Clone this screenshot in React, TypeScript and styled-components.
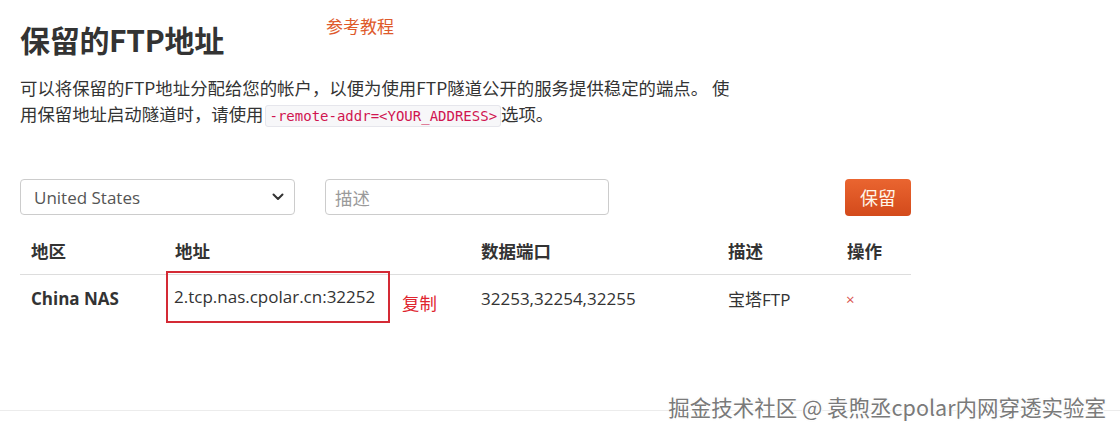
import React from "react";
import styled, { createGlobalStyle } from "styled-components";

const Global = createGlobalStyle`
  html, body { margin: 0; padding: 0; background: #fff; }
  body {
    font-family: "Open Sans", "Noto Sans CJK SC", sans-serif;
    color: #333;
    width: 1120px;
    height: 435px;
    overflow: hidden;
  }
  #root { position: relative; height: 435px; }
`;

const Page = styled.div`
  display: flex;
  flex-direction: column;
  height: 435px;
`;

const Content = styled.main`
  width: 891px;
  padding: 0 0 0 20px;
  display: flex;
  flex-direction: column;
`;

const TitleRow = styled.div`
  display: flex;
  align-items: flex-start;
  gap: 102px;
  padding-top: 16px;
`;

const Title = styled.h1`
  margin: 6px 0 0;
  font-size: 30px;
  line-height: 34px;
  font-weight: 700;
  color: #333;
  font-family: "Noto Sans CJK SC", "Open Sans", sans-serif;
  letter-spacing: -0.3px;
`;

const GuideLink = styled.a`
  font-size: 17px;
  line-height: 20px;
  color: #de5a2b;
  text-decoration: none;
  font-family: "Noto Sans CJK SC", sans-serif;
`;

const Intro = styled.p`
  margin: 19px 0 0;
  width: 725px;
  font-size: 17.4px;
  line-height: 26px;
  color: #333;
  font-family: "Noto Sans CJK SC", "Open Sans", sans-serif;
`;

const Code = styled.code`
  font-family: "DejaVu Sans Mono", "Liberation Mono", monospace;
  font-size: 14px;
  line-height: 18px;
  color: #d01450;
  background: #f7f7f9;
  border: 1px solid #e6e6ec;
  border-radius: 3px;
  padding: 2px 3px;
  margin: 0 0 0 2px;
`;

const FormRow = styled.div`
  margin-top: 52px;
  display: flex;
  align-items: center;
  height: 36px;
`;

const SelectBox = styled.div`
  position: relative;
  width: 275px;
  height: 36px;
  box-sizing: border-box;
  border: 1px solid #ccc;
  border-radius: 4px;
  display: flex;
  align-items: center;
  justify-content: space-between;
  padding: 0 10px 0 13px;
  font-size: 17px;
  color: #555;
  font-family: "Open Sans", sans-serif;
`;

const TextInput = styled.input`
  margin-left: 30px;
  width: 284px;
  height: 36px;
  box-sizing: border-box;
  border: 1px solid #ccc;
  border-radius: 4px;
  padding: 0 9px;
  font-size: 17.4px;
  font-family: "Noto Sans CJK SC", sans-serif;
  outline: none;
  &::placeholder { color: #9a9a9a; }
`;

const Reserve = styled.button`
  margin-left: auto;
  width: 66px;
  height: 37px;
  border: none;
  border-radius: 4px;
  background: linear-gradient(#ea6530, #d34a1b);
  color: #fff6ea;
  font-size: 18px;
  font-family: "Noto Sans CJK SC", sans-serif;
  padding: 0;
`;

const Grid = styled.div`
  margin-top: 12px;
  display: grid;
  grid-template-columns: 144px 306px 247px 119px 75px;
`;

const Cell = styled.div<{ $head?: boolean; $bold?: boolean }>`
  height: 47px;
  display: flex;
  align-items: center;
  padding-left: 11px;
  font-size: ${(p) => (p.$head ? "17.5px" : "17px")};
  font-weight: ${(p) => (p.$head || p.$bold ? 700 : 400)};
  color: #333;
  font-family: ${(p) =>
    p.$head ? `"Noto Sans CJK SC", sans-serif` : `"Open Sans", "Noto Sans CJK SC", sans-serif`};
  border-bottom: ${(p) => (p.$head ? "1px solid #ddd" : "none")};
  white-space: nowrap;
`;

const AddrCell = styled(Cell)`
  padding-left: 2px;
`;

const AddrBox = styled.span`
  display: inline-flex;
  align-items: center;
  box-sizing: border-box;
  width: 224px;
  height: 52px;
  margin-top: -4px;
  padding-left: 6px;
  border: 2px solid #d42a35;
`;

const CopyLink = styled.span`
  margin-left: 12px;
  margin-top: 8px;
  color: #e0242e;
  font-size: 17.4px;
  font-family: "Noto Sans CJK SC", sans-serif;
`;

const Remove = styled.span`
  color: #d9534f;
  font-size: 15px;
  margin-left: -1px;
`;

const Footer = styled.footer`
  margin-top: auto;
  margin-bottom: 24px;
  border-top: 1px solid #ececec;
`;

const Watermark = styled.div`
  position: absolute;
  right: 14px;
  top: 393px;
  font-size: 21.5px;
  line-height: 28px;
  color: #7a7a7a;
  font-family: "Noto Sans CJK SC", sans-serif;
  text-shadow: 1px 1px 0 #fff, -1px -1px 0 #fff, 1px -1px 0 #fff, -1px 1px 0 #fff, 0 0 2px #ccc;
  white-space: nowrap;
`;

const Chevron = () => (
  <svg width="12" height="8" viewBox="0 0 12 8">
    <path d="M1.5 1.5 L6 6 L10.5 1.5" fill="none" stroke="#333" strokeWidth="2" strokeLinecap="round" strokeLinejoin="round" />
  </svg>
);

export default function App() {
  return (
    <>
      <Global />
      <Page>
        <Content>
          <TitleRow>
            <Title>保留的FTP地址</Title>
            <GuideLink>参考教程</GuideLink>
          </TitleRow>
          <Intro>
            可以将保留的FTP地址分配给您的帐户，以便为使用FTP隧道公开的服务提供稳定的端点。 使用保留地址启动隧道时，请使用<Code>-remote-addr=&lt;YOUR_ADDRESS&gt;</Code>选项。
          </Intro>
          <FormRow>
            <SelectBox>
              <span>United States</span>
              <Chevron />
            </SelectBox>
            <TextInput placeholder="描述" />
            <Reserve>保留</Reserve>
          </FormRow>
          <Grid>
            <Cell $head>地区</Cell>
            <Cell $head>地址</Cell>
            <Cell $head>数据端口</Cell>
            <Cell $head>描述</Cell>
            <Cell $head>操作</Cell>
            <Cell $bold>China NAS</Cell>
            <AddrCell>
              <AddrBox>2.tcp.nas.cpolar.cn:32252</AddrBox>
              <CopyLink>复制</CopyLink>
            </AddrCell>
            <Cell>32253,32254,32255</Cell>
            <Cell>宝塔FTP</Cell>
            <Cell>
              <Remove>×</Remove>
            </Cell>
          </Grid>
        </Content>
        <Footer />
      </Page>
      <Watermark>掘金技术社区 @ 袁煦丞cpolar内网穿透实验室</Watermark>
    </>
  );
}
